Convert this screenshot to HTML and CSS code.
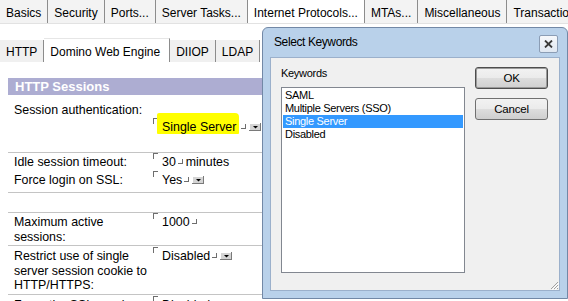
FILE: index.html
```html
<!DOCTYPE html>
<html>
<head>
<meta charset="utf-8">
<link rel="stylesheet" href="styles.css">
</head>
<body>
<div class="page">
  <nav class="tabs tabs-top">
    <span class="tab">Basics</span>
    <span class="tab">Security</span>
    <span class="tab">Ports...</span>
    <span class="tab">Server Tasks...</span>
    <span class="tab active">Internet Protocols...</span>
    <span class="tab">MTAs...</span>
    <span class="tab">Miscellaneous</span>
    <span class="tab">Transactio</span>
  </nav>
  <nav class="tabs tabs-sub">
    <span class="tab">HTTP</span>
    <span class="tab active">Domino Web Engine</span>
    <span class="tab">DIIOP</span>
    <span class="tab">LDAP</span>
  </nav>

  <section class="form">
    <div class="section-head">HTTP Sessions</div>
    <div class="row row-auth">
      <div class="label">Session authentication:</div>
      <div class="value value-low"><span class="fo"></span><span class="hl">Single Server</span><span class="fc"></span><svg class="dd" width="12" height="8" viewBox="0 0 12 8"><rect x="0" y="0" width="12" height="8" fill="#d4d4d4"/><path d="M0 0.5H11.5M0.5 0V8" stroke="#fff"/><path d="M0 7.5H12M11.5 0V8" stroke="#7a7a7a"/><path d="M4 3H9L6.5 5.5Z" fill="#000"/></svg></div>
    </div>
    <div class="row row-pair">
      <div class="label">Idle session timeout:</div>
      <div class="value"><span class="fo"></span>30<span class="fc"></span>minutes</div>
      <div class="label">Force login on SSL:</div>
      <div class="value"><span class="fo"></span>Yes<span class="fc"></span><svg class="dd" width="12" height="8" viewBox="0 0 12 8"><rect x="0" y="0" width="12" height="8" fill="#d4d4d4"/><path d="M0 0.5H11.5M0.5 0V8" stroke="#fff"/><path d="M0 7.5H12M11.5 0V8" stroke="#7a7a7a"/><path d="M4 3H9L6.5 5.5Z" fill="#000"/></svg></div>
    </div>
    <div class="row row-empty">
      <div class="label"></div>
      <div class="value"></div>
    </div>
    <div class="row row-max">
      <div class="label">Maximum active sessions:</div>
      <div class="value"><span class="fo"></span>1000<span class="fc"></span></div>
    </div>
    <div class="row row-restrict">
      <div class="label">Restrict use of single server session cookie to HTTP/HTTPS:</div>
      <div class="value"><span class="fo"></span>Disabled<span class="fc"></span><svg class="dd" width="12" height="8" viewBox="0 0 12 8"><rect x="0" y="0" width="12" height="8" fill="#d4d4d4"/><path d="M0 0.5H11.5M0.5 0V8" stroke="#fff"/><path d="M0 7.5H12M11.5 0V8" stroke="#7a7a7a"/><path d="M4 3H9L6.5 5.5Z" fill="#000"/></svg></div>
    </div>
    <div class="row row-last">
      <div class="label">Force the SSL session cookie:</div>
      <div class="value"><span class="fo"></span>Disabled<span class="fc"></span></div>
    </div>
  </section>
</div>

<div class="dialog">
  <div class="dialog-title">Select Keywords</div>
  <button class="close" type="button" aria-label="Close"><svg width="9" height="8" viewBox="0 0 9 8"><path d="M1 0.5L8 7.5M8 0.5L1 7.5" stroke="#3a3a3a" stroke-width="1.8"/></svg></button>
  <div class="dialog-body">
    <div class="kw-col">
      <div class="kw-label">Keywords</div>
      <ul class="listbox">
        <li>SAML</li>
        <li>Multiple Servers (SSO)</li>
        <li class="selected">Single Server</li>
        <li>Disabled</li>
      </ul>
    </div>
    <div class="btn-col">
      <button class="btn btn-default" type="button">OK</button>
      <button class="btn" type="button">Cancel</button>
    </div>
    <svg class="grip" width="9" height="9" viewBox="0 0 9 9"><path d="M8 1L1 8M8 4L4 8M8 7L7 8" stroke="#a0a0a0" stroke-width="1"/><path d="M9 2L2 9M9 5L5 9" stroke="#ffffff" stroke-width="1"/></svg>
  </div>
</div>
</body>
</html>
```

FILE: styles.css
```css
* { box-sizing: border-box; }

html, body { margin: 0; padding: 0; }

body {
  width: 568px;
  height: 301px;
  overflow: hidden;
  position: relative;
  background: #fff;
  color: #000;
  font-family: "Liberation Sans", Arial, sans-serif;
}

/* ---------- tabs ---------- */
.tabs {
  display: flex;
  font-size: 12px;
  white-space: nowrap;
  overflow: hidden;
}

.tabs-top {
  height: 24px;
  border-bottom: 1px solid #e2e2e2;
}

.tabs-top .tab {
  flex: none;
  height: 23px;
  padding: 3px 6px 0;
  line-height: 20px;
  background: #f3f3f3;
  border-right: 1px solid #8c8c8c;
}

.tabs-top .tab:last-child { border-right: 0; }

.tabs .tab.active { background: #fff; }

.tabs-sub {
  height: 24px;
  margin-top: 14px;
  align-items: flex-end;
  width: 262px;
}

.tabs-sub .tab {
  flex: none;
  height: 22px;
  padding: 2px 6px 0;
  line-height: 20px;
  background: #f0f0f0;
  border-right: 1px solid #8c8c8c;
}

.tabs-sub .tab.active {
  height: 24px;
  padding: 3px 9px 0 6px;
  background: #fff;
  border-top: 1px solid #e6e6e6;
}

/* ---------- form ---------- */
.form {
  margin: 16px 0 0 8px;
  width: 262px;
  font-size: 12.4px;
  line-height: 14.5px;
}

.section-head {
  height: 17px;
  padding-left: 7px;
  line-height: 17px;
  background: #adadd2;
  color: #fff;
  font-size: 13px;
  font-weight: bold;
}

.row {
  display: grid;
  grid-template-columns: 139px 1fr;
  align-content: start;
  padding: 2px 0 0 6px;
  border-bottom: 1px solid #c4c4c4;
}

.value { white-space: nowrap; }

.row-auth { height: 58px; padding-top: 8px; }
.value-low { padding-top: 17px; }
.row-pair { height: 40px; row-gap: 3.5px; }
.row-empty { height: 20px; }
.row-max { height: 33px; }
.row-restrict { height: 49px; padding-top: 3px; }
.row-last { padding-top: 3px; border-bottom: 0; }

/* Notes field delimiters */
.fo {
  display: inline-block;
  width: 5px;
  height: 6px;
  margin: -2px 4px 0 0;
  border-left: 1px solid #6e6e6e;
  border-top: 1px solid #6e6e6e;
  vertical-align: top;
}

.fc {
  display: inline-block;
  width: 5px;
  height: 5px;
  margin: 0 3px 0 2px;
  border-right: 1px solid #6e6e6e;
  border-bottom: 1px solid #6e6e6e;
  vertical-align: 2px;
}

.hl {
  background: #ffff00;
  padding: 7px 3px 0 5px;
  margin-left: -5px;
  border-radius: 2px 4px 1px 1px;
}

.dd {
  vertical-align: baseline;
}

/* ---------- dialog ---------- */
.dialog {
  position: absolute;
  left: 262px;
  top: 27px;
  width: 306px;
  height: 272px;
  display: flex;
  flex-direction: column;
  padding: 0 7px 7px 7px;
  background: #b9d1ea;
  border: 1px solid #7288a6;
  border-radius: 6px 6px 0 0;
}

.dialog-title {
  height: 29px;
  padding-left: 4px;
  font-size: 12px;
  letter-spacing: -0.4px;
  line-height: 29px;
}

.close {
  position: absolute;
  top: 7px;
  right: 9px;
  width: 19px;
  height: 18px;
  padding: 0;
  display: flex;
  align-items: center;
  justify-content: center;
  border: 1px solid #8b9db5;
  border-radius: 2px;
  background: linear-gradient(#f6f8fb, #dfe7f1);
}

.dialog-body {
  flex: 1;
  position: relative;
  display: flex;
  gap: 10px;
  padding: 9px 11px 0 10px;
  background: #f0f0f0;
  border: 1px solid #9bb0cb;
  font-size: 11px;
  letter-spacing: -0.3px;
}

.kw-col {
  width: 184px;
  flex: none;
}

.kw-label {
  line-height: 13px;
  margin-bottom: 7px;
}

.listbox {
  list-style: none;
  margin: 0;
  width: 184px;
  height: 186px;
  padding: 1px;
  background: #fff;
  border: 1px solid #828790;
  line-height: 13px;
}

.listbox li { padding-left: 2px; }

.listbox .selected {
  background: #3399ff;
  color: #fff;
}

.btn-col {
  display: flex;
  flex-direction: column;
  gap: 9px;
}

.btn {
  width: 73px;
  height: 22px;
  padding: 0;
  border: 1px solid #707070;
  border-radius: 3px;
  background: linear-gradient(#f2f2f2 0%, #ebebeb 48%, #dddddd 52%, #cfcfcf 100%);
  color: #000;
  font-family: "Liberation Sans", Arial, sans-serif;
  font-size: 11.5px;
  letter-spacing: -0.2px;
}

.btn-default {
  border-color: #4d4d4d;
  box-shadow: inset 0 0 0 1px #9a9a9a;
}

.grip {
  position: absolute;
  right: 0;
  bottom: 0;
}
```
